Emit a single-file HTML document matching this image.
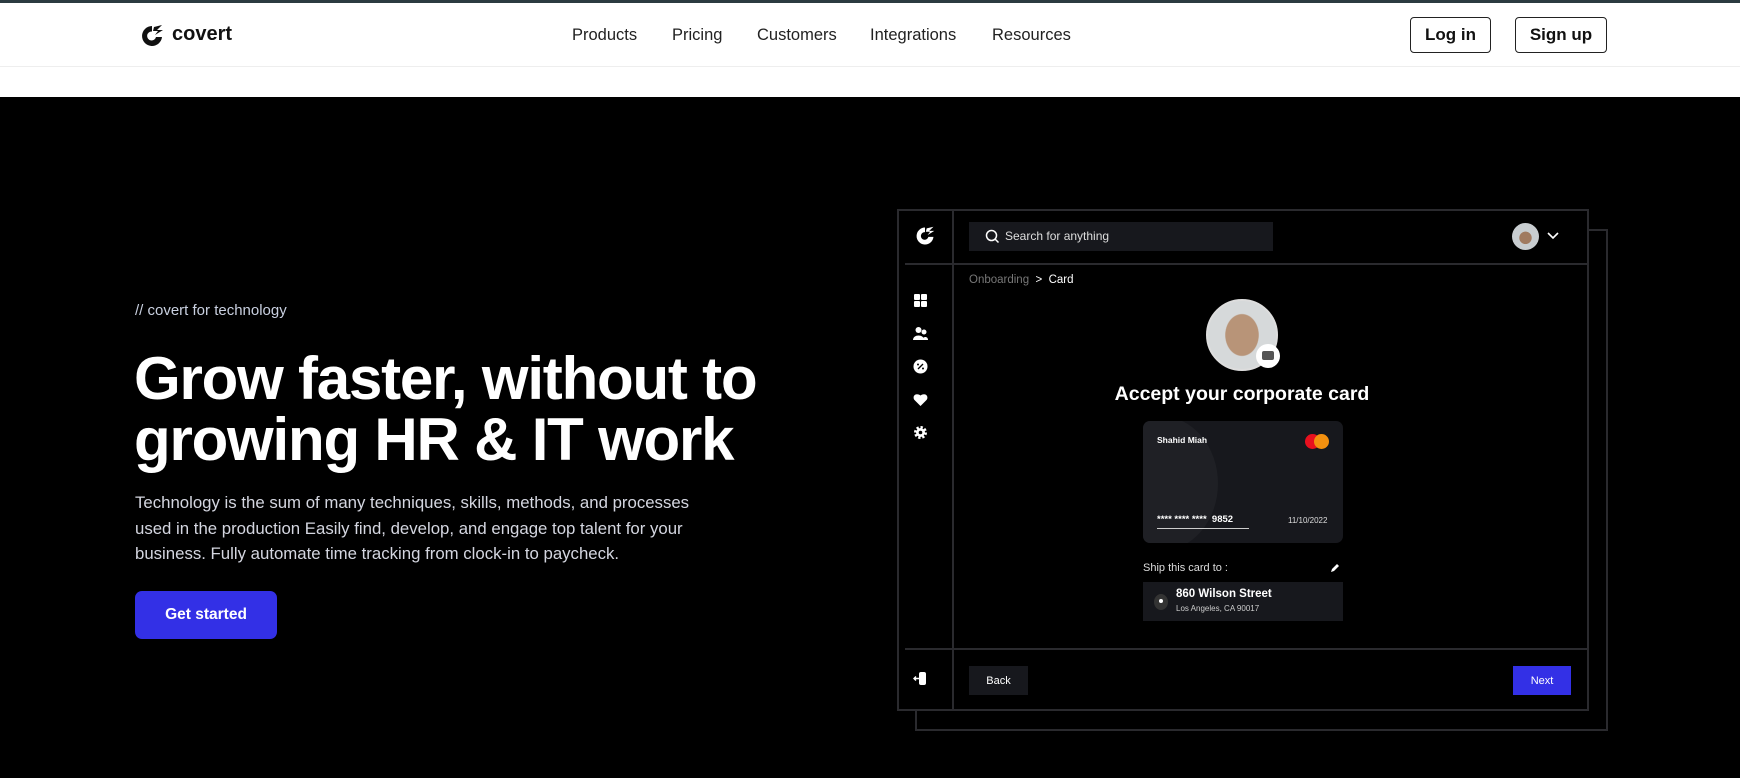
<!DOCTYPE html>
<html><head><meta charset="utf-8"><style>
*{margin:0;padding:0;box-sizing:border-box}
body{width:1740px;height:778px;overflow:hidden;background:#000;font-family:"Liberation Sans",sans-serif;position:relative}
.abs{position:absolute}
.topbar{left:0;top:0;width:1740px;height:3px;background:#2b3b40}
.nav{left:0;top:3px;width:1740px;height:64px;background:#fff;border-bottom:1px solid #eee}
.sub{left:0;top:66px;width:1740px;height:31px;background:#fff;border-top:1px solid #eee}
.link{top:23px;font-size:16.5px;color:#222}
.btn{top:14px;height:36px;border:1.5px solid #222;border-radius:4px;font-size:17px;font-weight:bold;color:#111;display:flex;align-items:center;justify-content:center}
.w{color:#fff}
.line{background:#2a2a2e}
.sico{left:913px;width:15px;height:15px}
</style></head><body>
<div class="abs topbar"></div>
<div class="abs nav">
  <svg class="abs" style="left:139px;top:20px" width="26" height="26" viewBox="0 0 26 26"><path d="M13 3 A10 10 0 1 0 23 14 L17 14 A4.5 4.5 0 1 1 13 8.5 Z" fill="#111"/><path d="M15 4 L23 2 L18 7 L24 7 L16 12 L19 8 L14 8 Z" fill="#111"/></svg>
  <div class="abs" style="left:172px;top:20px;font-size:20px;font-weight:bold;color:#111">covert</div>
  <div class="abs link" style="left:572px">Products</div>
  <div class="abs link" style="left:672px">Pricing</div>
  <div class="abs link" style="left:757px">Customers</div>
  <div class="abs link" style="left:870px">Integrations</div>
  <div class="abs link" style="left:992px">Resources</div>
  <div class="abs btn" style="left:1410px;width:81px">Log in</div>
  <div class="abs btn" style="left:1515px;width:92px">Sign up</div>
</div>
<div class="abs sub"></div>

<div class="abs" style="left:135px;top:302px;font-size:15px;color:#c9d0e0">// covert for technology</div>
<div class="abs w" style="left:134px;top:348px;font-size:60px;font-weight:bold;letter-spacing:-1.2px;line-height:61px">Grow faster, without to<br>growing HR &amp; IT work</div>
<div class="abs" style="left:135px;top:490px;font-size:16.8px;line-height:25.5px;color:#d4d6e0">Technology is the sum of many techniques, skills, methods, and processes<br>used in the production Easily find, develop, and engage top talent for your<br>business. Fully automate time tracking from clock-in to paycheck.</div>
<div class="abs w" style="left:135px;top:591px;width:142px;height:48px;background:#3330e6;border-radius:7px;font-size:15.5px;font-weight:bold;display:flex;align-items:center;justify-content:center">Get started</div>

<!-- mockup -->
<div class="abs" style="left:915px;top:229px;width:693px;height:502px;border:2px solid #2a2a2e"></div>
<div class="abs" style="left:897px;top:209px;width:692px;height:502px;border:2px solid #2a2a2e;background:#000"></div>
<div class="abs line" style="left:952px;top:211px;width:2px;height:498px"></div>
<div class="abs line" style="left:905px;top:263px;width:682px;height:2px"></div>
<div class="abs line" style="left:905px;top:648px;width:682px;height:2px"></div>
<svg class="abs" style="left:914px;top:225px" width="22" height="22" viewBox="0 0 26 26"><path d="M13 3 A10 10 0 1 0 23 14 L17 14 A4.5 4.5 0 1 1 13 8.5 Z" fill="#fff"/><path d="M15 4 L23 2 L18 7 L24 7 L16 12 L19 8 L14 8 Z" fill="#fff"/></svg>
<div class="abs" style="left:969px;top:222px;width:304px;height:29px;background:#17181d"></div>
<svg class="abs" style="left:985px;top:229px" width="15" height="15" viewBox="0 0 15 15"><circle cx="6.5" cy="6.5" r="5" stroke="#fff" stroke-width="1.5" fill="none"/><path d="M10 10 L13.5 13.5" stroke="#fff" stroke-width="1.5"/></svg>
<div class="abs" style="left:1005px;top:229px;font-size:12px;color:#ddd">Search for anything</div>
<div class="abs" style="left:1512px;top:223px;width:27px;height:27px;border-radius:50%;background:radial-gradient(circle at 50% 55%,#a07a60 0 30%,#c8cdd0 32%)"></div>
<svg class="abs" style="left:1546px;top:231px" width="14" height="10"><path d="M2 2 L7 7 L12 2" stroke="#fff" stroke-width="1.6" fill="none"/></svg>
<svg class="abs sico" style="top:293px" viewBox="0 0 15 15"><rect x="1" y="1" width="6" height="6" rx="1" fill="#fff"/><rect x="8" y="1" width="6" height="6" rx="1" fill="#fff"/><rect x="1" y="8" width="6" height="6" rx="1" fill="#fff"/><rect x="8" y="8" width="6" height="6" rx="1" fill="#fff"/></svg>
<svg class="abs sico" style="top:326px" viewBox="0 0 15 15"><circle cx="5.5" cy="4" r="3" fill="#fff"/><path d="M0 14 C0 8 11 8 11 14Z" fill="#fff"/><circle cx="11" cy="6" r="2.5" fill="#fff"/><path d="M9 14 C10 10 15 10 15 14Z" fill="#fff"/></svg>
<svg class="abs sico" style="top:359px" viewBox="0 0 15 15"><circle cx="7.5" cy="7.5" r="7" fill="#fff"/><path d="M5 10 L10 5" stroke="#000" stroke-width="1.3"/><circle cx="5" cy="5.5" r="1" fill="#000"/><circle cx="10" cy="9.5" r="1" fill="#000"/></svg>
<svg class="abs sico" style="top:392px" viewBox="0 0 15 15"><path d="M7.5 14 L1.5 8 C-1 5 2 0 7.5 3.5 C13 0 16 5 13.5 8Z" fill="#fff"/></svg>
<svg class="abs sico" style="top:425px" viewBox="0 0 15 15"><circle cx="7.5" cy="7.5" r="5" fill="none" stroke="#fff" stroke-width="3" stroke-dasharray="2.2 1.7"/><circle cx="7.5" cy="7.5" r="4.5" fill="#fff"/><circle cx="7.5" cy="7.5" r="1.8" fill="#000"/></svg>
<svg class="abs sico" style="top:671px" viewBox="0 0 15 15"><rect x="6" y="1" width="7" height="13" rx="2" fill="#fff"/><path d="M1 7.5 H7 M3 5.5 L1 7.5 L3 9.5" stroke="#fff" stroke-width="1.4" fill="none"/></svg>
<div class="abs" style="left:969px;top:274px;font-size:11.5px;color:#777">Onboarding <span style="color:#fff">&nbsp;&gt;&nbsp; Card</span></div>
<div class="abs" style="left:1206px;top:299px;width:72px;height:72px;border-radius:50%;border:2px solid #ddd;background:radial-gradient(ellipse 40% 50% at 50% 50%,#b89478 0 60%,#d6d9da 63%)"></div>
<div class="abs" style="left:1256px;top:344px;width:24px;height:24px;border-radius:50%;background:#fff"></div>
<div class="abs" style="left:1262px;top:351px;width:12px;height:9px;border-radius:2px;background:#555"></div>
<div class="abs w" style="left:1080px;top:383px;width:324px;text-align:center;font-size:19.5px;font-weight:bold">Accept your corporate card</div>
<div class="abs" style="left:1143px;top:421px;width:200px;height:122px;border-radius:7px;background:#17181d;overflow:hidden">
  <div class="abs" style="left:-40px;top:-5px;width:115px;height:135px;border-radius:50%;background:#1f2025"></div>
  <div class="abs w" style="left:14px;top:14px;font-size:8.5px;font-weight:bold">Shahid Miah</div>
  <div class="abs" style="left:162px;top:13px;width:15px;height:15px;border-radius:50%;background:#e8101e"></div>
  <div class="abs" style="left:171px;top:13px;width:15px;height:15px;border-radius:50%;background:#f3900f"></div>
  <div class="abs w" style="left:14px;top:93px;font-size:9.5px;font-weight:bold">**** **** **** &nbsp;9852</div>
  <div class="abs" style="left:14px;top:107px;width:92px;height:1px;background:#ccc"></div>
  <div class="abs" style="left:145px;top:95px;font-size:8px;color:#ddd">11/10/2022</div>
</div>
<div class="abs" style="left:1143px;top:562px;font-size:11px;color:#ddd">Ship this card to :</div>
<svg class="abs" style="left:1330px;top:563px" width="10" height="10"><path d="M1 9 L2 6 L7 1 L9 3 L4 8Z" fill="#fff"/></svg>
<div class="abs" style="left:1143px;top:582px;width:200px;height:39px;background:#17181d">
  <div class="abs" style="left:11px;top:12px;width:14px;height:16px;border-radius:50%;background:#333"></div>
  <div class="abs" style="left:16px;top:17px;width:4px;height:4px;border-radius:50%;background:#fff"></div>
  <div class="abs w" style="left:33px;top:6px;font-size:11.5px;font-weight:bold">860 Wilson Street</div>
  <div class="abs" style="left:33px;top:22px;font-size:8px;color:#ccc">Los Angeles, CA 90017</div>
</div>
<div class="abs w" style="left:969px;top:666px;width:59px;height:29px;background:#17181d;font-size:11px;display:flex;align-items:center;justify-content:center">Back</div>
<div class="abs w" style="left:1513px;top:666px;width:58px;height:29px;background:#3330e6;font-size:11px;display:flex;align-items:center;justify-content:center">Next</div>
</body></html>
